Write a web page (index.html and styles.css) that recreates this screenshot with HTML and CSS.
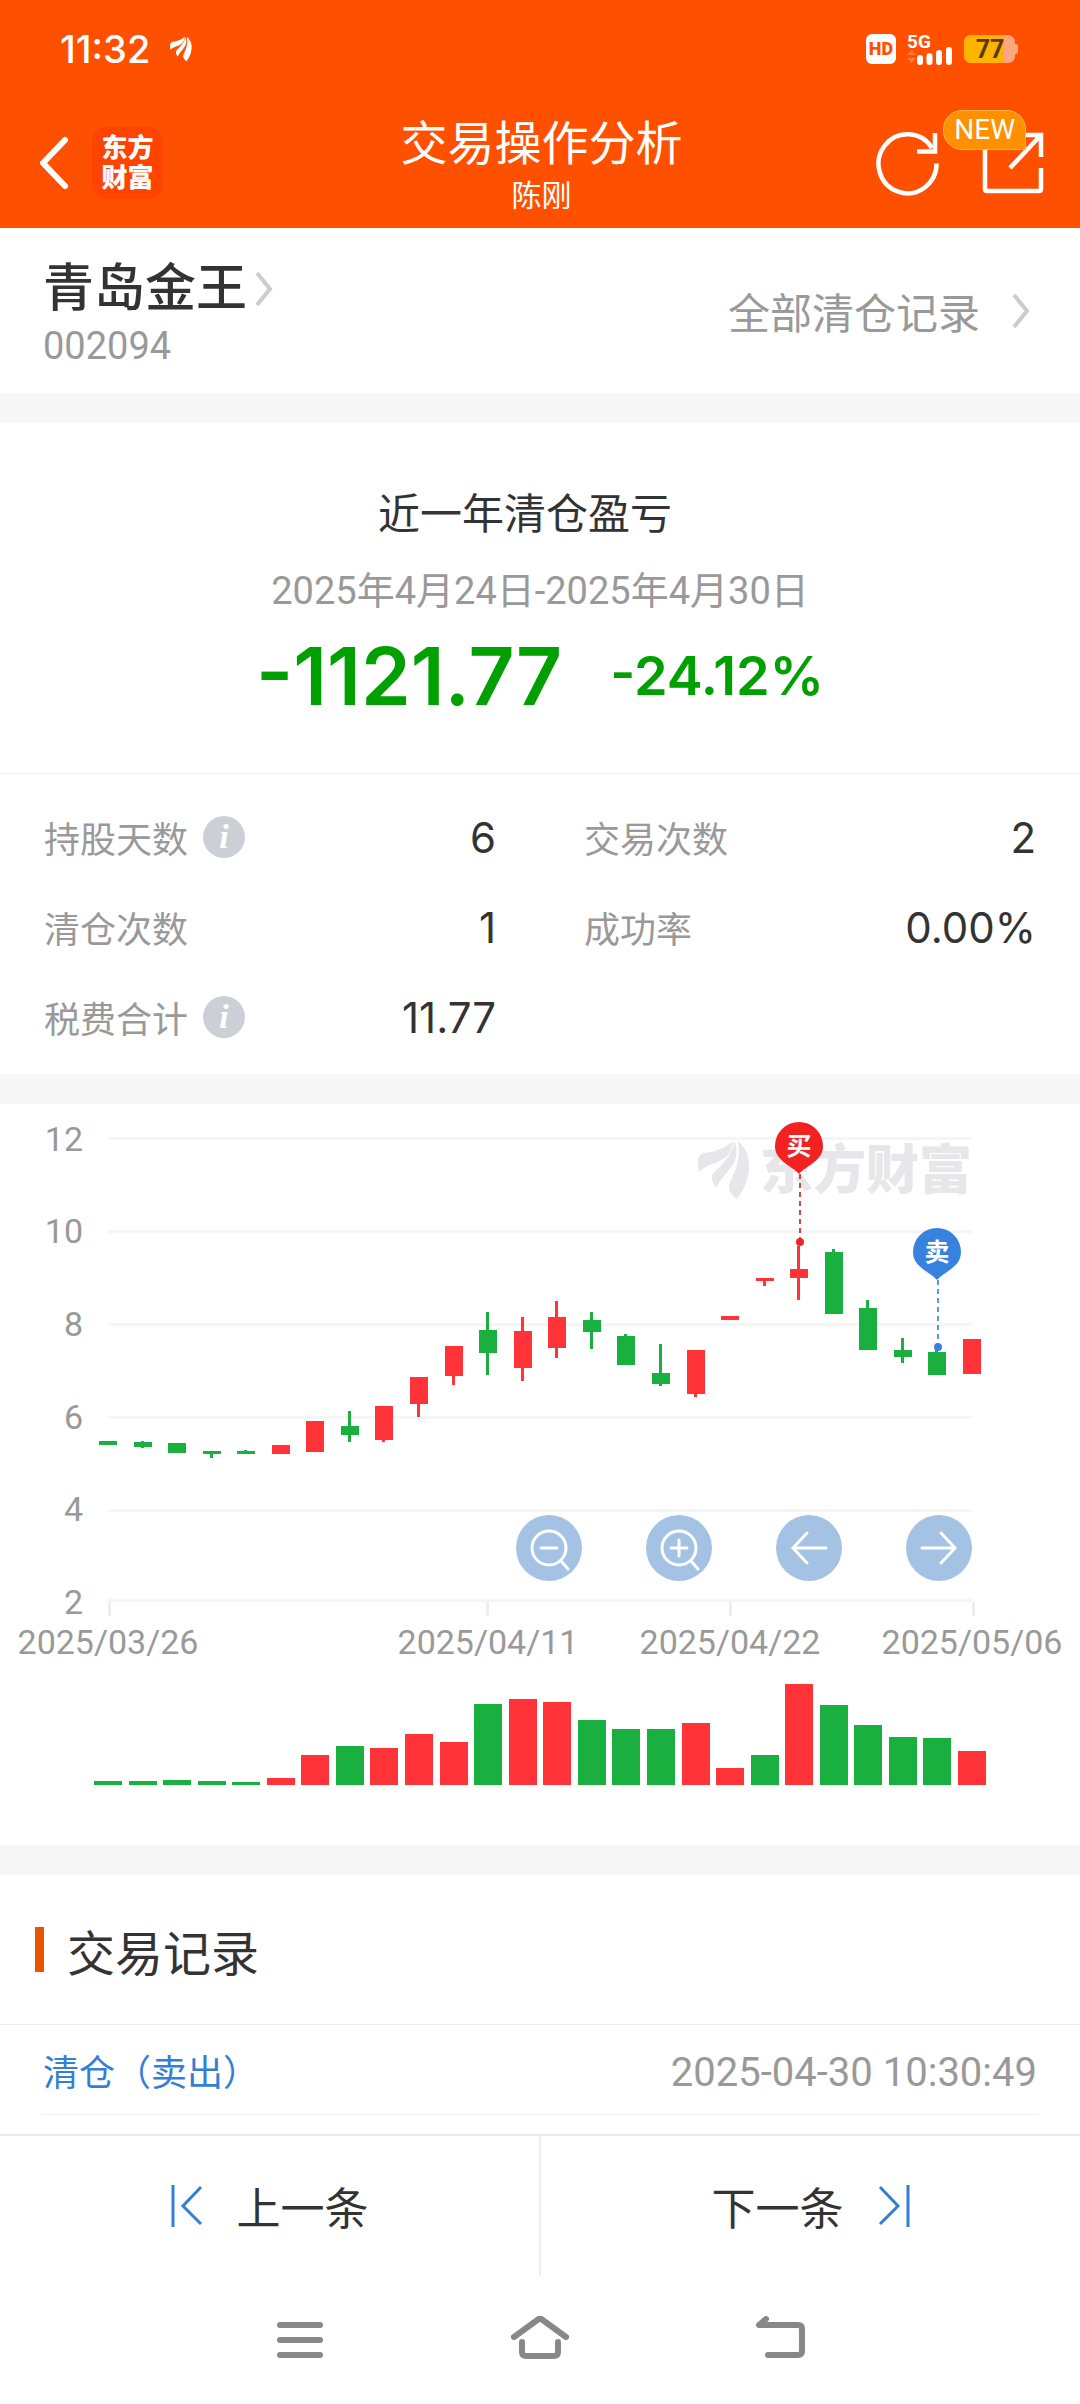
FILE: index.html
```html
<!DOCTYPE html>
<html lang="zh-CN">
<head>
  <meta charset="UTF-8">
  <meta name="viewport" content="width=device-width, initial-scale=1.0">
  <title>交易操作分析</title>
  <link rel="stylesheet" href="styles.css">
</head>
<body>
  <!-- 顶部 -->
  <header class="top">
    <div class="status">
      <span class="time">11:32</span>
      <svg class="status-leaf" width="22" height="26" viewBox="0 0 52 58">
        <use href="#leaf" fill="#fff"/>
      </svg>
      <div class="status-right">
        <span class="hd">HD</span>
        <svg width="46" height="44" viewBox="0 -6 46 44">
          <text class="net" x="0" y="15">5G</text>
          <path d="M0 22l4.500-5 4.500 5zM0 25h9l-4.500 5z" fill="#ff7a40"/>
          <path d="M13 25v4M22.500 23v6M32 20v9M42 17v12" stroke="#fff" stroke-width="6" stroke-linecap="round"/>
        </svg>
        <svg width="54" height="28" viewBox="0 0 54 28">
          <rect width="51" height="28" rx="7" fill="#ffa680"/>
          <rect x="49" y="9" width="5" height="10" rx="2" fill="#ffa680"/>
          <path d="M7 0h33v28H7a7 7 0 0 1-7-7V7a7 7 0 0 1 7-7z" fill="#ffb400"/>
          <text class="battery" x="26" y="23" text-anchor="middle">77</text>
        </svg>
      </div>
    </div>
    <div class="titlebar">
      <div class="left">
        <button class="icon-btn" aria-label="返回">
          <svg width="30" height="54" viewBox="0 0 30 54" fill="none" stroke="#fff" stroke-width="6" stroke-linecap="round" stroke-linejoin="round"><path d="M26 4L4 27l22 23"/></svg>
        </button>
        <div class="brand">东方<br>财富</div>
      </div>
      <div class="title">
        <h1>交易操作分析</h1>
        <p>陈刚</p>
      </div>
      <div class="right">
        <button class="icon-btn" aria-label="刷新">
          <svg width="64" height="66" viewBox="0 0 64 66" fill="none" stroke="#fff" stroke-width="4.500">
            <path d="M60.500 33.500A29 29.500 0 1 1 56 18"/><path d="M59 3v18.500H41"/>
          </svg>
        </button>
        <button class="icon-btn share" aria-label="分享">
          <svg width="62" height="62" viewBox="0 0 62 62" fill="none" stroke="#fff" stroke-width="4.500">
            <path d="M22 3H5q-2 0-2 2v52q0 2 2 2h52q2 0 2-2V36M40 3h19v22M58 4L28 36"/>
          </svg>
          <span class="new">NEW</span>
        </button>
      </div>
    </div>
  </header>

  <!-- 股票 -->
  <section class="stock">
    <a href="#" class="stock-name">
      <h2>青岛金王 <svg class="chev" width="18" height="36" viewBox="0 0 18 36"><path d="M2 2l13 16L2 34"/></svg></h2>
      <span class="code">002094</span>
    </a>
    <a href="#" class="all">全部清仓记录 <svg class="chev" width="18" height="36" viewBox="0 0 18 36"><path d="M2 2l13 16L2 34"/></svg></a>
  </section>

  <!-- 清仓盈亏 -->
  <section class="profit">
    <h3>近一年清仓盈亏</h3>
    <p class="period">2025年4月24日-2025年4月30日</p>
    <p class="result"><span class="amount">-1121.77</span><span class="rate">-24.12%</span></p>
  </section>
  <dl class="stats">
    <div><dt>持股天数 <i class="info">i</i></dt><dd>6</dd></div>
    <div><dt>交易次数</dt><dd>2</dd></div>
    <div><dt>清仓次数</dt><dd>1</dd></div>
    <div><dt>成功率</dt><dd>0.00%</dd></div>
    <div><dt>税费合计 <i class="info">i</i></dt><dd>11.77</dd></div>
  </dl>

  <!-- K线图 -->
  <section class="chart">
    <svg viewBox="0 0 1080 741">
      <defs>
        <g id="leaf">
          <path d="M0 18C1 13 5 12 12 11C22 9 30 5 35 0C34 14 25 20 14 23C8 25 4 28 1 31Q0 24 0 18z"/>
          <path d="M37 0C41 14 37 22 30 30C25 36 21 41 18 47Q13 39 14 35C16 28 30 24 37 0z"/>
          <path d="M40 0C49 8 52 18 51 28C50 41 45 50 39 58Q32 53 31 47C31 38 44 27 40 0z"/>
        </g>
      </defs>
      <g class="grid">
        <path d="M108 34.500H972M108 127.500H972M108 220.500H972M108 313.500H972M108 406.500H972M108 496.500H972"/>
        <path class="ticks" d="M109.500 498v14M487.500 498v14M730.500 498v14M973.500 498v14"/>
      </g>
      <g class="axis" text-anchor="end">
        <text x="83" y="47">12</text>
        <text x="83" y="139">10</text>
        <text x="83" y="232">8</text>
        <text x="83" y="325">6</text>
        <text x="83" y="417">4</text>
        <text x="83" y="510">2</text>
      </g>
      <g class="axis" text-anchor="middle">
        <text x="108" y="550">2025/03/26</text>
        <text x="488" y="550">2025/04/11</text>
        <text x="730" y="550">2025/04/22</text>
        <text x="972" y="550">2025/05/06</text>
      </g>
      <g class="watermark">
        <use href="#leaf" x="698" y="37"/>
        <text x="760" y="85">东方财富</text>
      </g>
      <g id="candles"></g>
      <g id="volumes"></g>
      <g class="mark buy">
        <path d="M800 70v64" class="dash"/>
        <circle cx="800" cy="138" r="4"/>
        <path d="M799 18a24 24 0 0 1 24 24c0 15-16 19-24 28c-8-9-24-13-24-28a24 24 0 0 1 24-24z"/>
        <text x="799" y="51">买</text>
      </g>
      <g class="mark sell">
        <path d="M938 176v64" class="dash"/>
        <circle cx="938" cy="243" r="4"/>
        <path d="M937 124a24 24 0 0 1 24 24c0 15-16 19-24 28c-8-9-24-13-24-28a24 24 0 0 1 24-24z"/>
        <text x="937" y="157">卖</text>
      </g>
    </svg>
    <div class="tools">
      <button aria-label="缩小"><svg viewBox="0 0 66 66"><circle cx="33" cy="33" r="17"/><path d="M25 33h16M45 46l7 8"/></svg></button>
      <button aria-label="放大"><svg viewBox="0 0 66 66"><circle cx="33" cy="33" r="17"/><path d="M25 33h16M33 25v16M45 46l7 8"/></svg></button>
      <button aria-label="左移"><svg viewBox="0 0 66 66"><path d="M50 33H17M31 18L17 33l14 15"/></svg></button>
      <button aria-label="右移"><svg viewBox="0 0 66 66"><path d="M16 33h33M35 18l14 15-14 15"/></svg></button>
    </div>
  </section>

  <!-- 交易记录 -->
  <section class="records">
    <h3>交易记录</h3>
    <ul>
      <li><a href="#">清仓（卖出）</a><time>2025-04-30 10:30:49</time></li>
    </ul>
  </section>

  <nav class="pager">
    <button><svg width="32" height="42" viewBox="0 0 32 42"><path d="M2 0v42M30 2L12 21l18 18"/></svg>上一条</button>
    <button>下一条<svg width="32" height="42" viewBox="0 0 32 42"><path d="M30 0v42M2 2l18 19L2 39"/></svg></button>
  </nav>

  <!-- 系统导航键 -->
  <nav class="system">
    <button aria-label="菜单"><svg width="60" height="48" viewBox="0 0 60 48"><path d="M10 9h40M10 24h40M10 39h40"/></svg></button>
    <button aria-label="主页"><svg width="60" height="48" viewBox="0 0 60 48"><path d="M4 21L30 2l26 19M12 26v10q0 4 4 4h28q4 0 4-4V26"/></svg></button>
    <button aria-label="后退"><svg width="60" height="48" viewBox="0 0 60 48"><path d="M16 3L9 9h39q4 0 4 4v22q0 4-4 4H18"/></svg></button>
  </nav>

  <script src="chart.js"></script>
</body>
</html>
```
FILE: styles.css
```css
/* 全局 */
* {
  box-sizing: border-box;
  margin: 0;
  padding: 0;
}

body {
  font-family: Roboto, "Noto Sans CJK SC", sans-serif;
  background: #fff;
  color: #333;
}

h1, h2, h3 {
  font-weight: 400;
}

a {
  color: inherit;
  text-decoration: none;
}

ul {
  list-style: none;
}

svg {
  display: block;
}

button {
  font: inherit;
  color: inherit;
  background: none;
  border: none;
  cursor: pointer;
}

/* 顶部 */
.top {
  background: #ff5000;
  color: #fff;
}

.status {
  display: flex;
  align-items: center;
  height: 98px;
  padding: 0 62px 0 60px;
}

.time {
  font: 500 38px Inter, sans-serif;
}

.status-leaf {
  margin-left: 20px;
}

.status-right {
  display: flex;
  align-items: center;
  gap: 11px;
  margin-left: auto;
}

.hd {
  width: 30px;
  border-radius: 6px;
  background: #fff;
  color: #ff5000;
  font-size: 18px;
  font-weight: 900;
  line-height: 30px;
  text-align: center;
}

.net {
  font-size: 19px;
  font-weight: 700;
  fill: #fff;
}

.battery {
  font-size: 25px;
  font-weight: 700;
  fill: #5a3a00;
}

.titlebar {
  display: grid;
  grid-template-columns: 1fr auto 1fr;
  align-items: center;
  height: 130px;
  padding: 0 36px 0 39px;
}

.left, .right {
  display: flex;
  align-items: center;
}

.left {
  gap: 23px;
}

.right {
  justify-content: flex-end;
  gap: 42px;
}

.brand {
  width: 71px;
  height: 72px;
  padding-top: 6px;
  border-radius: 14px;
  background: #ff4400;
  font-size: 26px;
  font-weight: 900;
  line-height: 30px;
  text-align: center;
}

.title {
  padding-top: 8px;
  text-align: center;
}

.title h1 {
  font-size: 47px;
  line-height: 58px;
}

.title p {
  font-size: 30px;
  line-height: 46px;
}

.share {
  position: relative;
}

.new {
  position: absolute;
  right: 18px;
  bottom: 44px;
  padding: 0 10px;
  border: 1px solid #ffb352;
  border-radius: 19px 19px 0 19px;
  background: #ff9000;
  font-size: 28px;
  line-height: 38px;
}

/* 股票 */
.stock {
  display: flex;
  justify-content: space-between;
  align-items: center;
  height: 165px;
  padding: 0 50px 0 43px;
}

.stock-name {
  padding-top: 10px;
}

.stock h2 {
  display: flex;
  align-items: center;
  gap: 8px;
  font-size: 51px;
  font-weight: 500;
  line-height: 60px;
}

.code {
  color: #999;
  font-size: 38px;
  line-height: 54px;
}

.all {
  display: flex;
  align-items: center;
  gap: 32px;
  color: #999;
  font-size: 42px;
}

.chev {
  fill: none;
  stroke: #ccc;
  stroke-width: 4;
}

/* 清仓盈亏 */
.profit {
  padding: 62px 0 42px;
  border-top: 30px solid #f7f7f7;
  border-bottom: 1px solid #eee;
  text-align: center;
}

.profit h3 {
  padding-right: 30px;
  font-size: 42px;
  line-height: 60px;
}

.period {
  margin-top: 16px;
  color: #999;
  font-size: 38px;
  line-height: 60px;
}

.result {
  display: flex;
  justify-content: center;
  align-items: center;
  gap: 48px;
  color: #00a000;
  font-family: Inter, sans-serif;
  font-weight: 600;
  line-height: 110px;
}

.amount {
  font-size: 80px;
}

.rate {
  font-size: 54px;
}

.stats {
  display: grid;
  grid-template-columns: 1fr 1fr;
  column-gap: 88px;
  padding: 18px 44px 12px;
}

.stats div {
  display: flex;
  justify-content: space-between;
  align-items: center;
  height: 90px;
}

.stats dt {
  display: flex;
  align-items: center;
  gap: 15px;
  color: #999;
  font-size: 36px;
}

.stats dd {
  font-family: Inter, sans-serif;
  font-size: 42px;
}

.info {
  width: 42px;
  border-radius: 50%;
  background: #ccd0d6;
  color: #fff;
  font: italic 700 34px "Liberation Serif", serif;
  line-height: 42px;
  text-align: center;
}

/* K线图 */
.chart {
  position: relative;
  border-top: 30px solid #f7f7f7;
}

.grid {
  stroke: #f5f5f5;
  stroke-width: 3;
}

.ticks {
  stroke: #eee;
}

.axis {
  font-size: 34px;
  fill: #999;
}

.watermark {
  fill: #e6e6eb;
}

.watermark text {
  font-size: 53px;
  font-weight: 900;
}

.up {
  fill: #ff3338;
}

.down {
  fill: #1ab040;
}

.mark text {
  font-size: 25px;
  font-weight: 700;
  fill: #fff;
  text-anchor: middle;
}

.buy {
  fill: #f22222;
}

.sell {
  fill: #3782df;
}

.dash {
  stroke-width: 2;
  stroke-dasharray: 5 4;
}

.buy .dash {
  stroke: #d04545;
}

.sell .dash {
  stroke: #5b9bd0;
}

.tools {
  position: absolute;
  right: 108px;
  bottom: 264px;
  display: flex;
  gap: 64px;
}

.tools button {
  width: 66px;
  height: 66px;
  border-radius: 50%;
  background: #a4c2e4;
}

.tools svg {
  fill: none;
  stroke: #fff;
  stroke-width: 3;
  stroke-linecap: round;
}

/* 交易记录 */
.records {
  padding-bottom: 19px;
  border-top: 30px solid #f7f7f7;
}

.records h3 {
  display: flex;
  align-items: center;
  gap: 23px;
  height: 149px;
  padding-left: 35px;
  font-size: 48px;
}

.records h3::before {
  content: "";
  width: 9px;
  height: 45px;
  background: #e85500;
}

.records ul {
  padding: 0 43px;
  border-top: 1px solid #eee;
}

.records li {
  display: flex;
  justify-content: space-between;
  align-items: center;
  height: 90px;
  border-bottom: 1px solid #eee;
}

.records a {
  color: #337fd3;
  font-size: 36px;
}

.records time {
  padding-top: 6px;
  color: #999;
  font-size: 40px;
}

/* 底部 */
.pager {
  display: flex;
  border-top: 2px solid #ebebeb;
}

.pager button {
  flex: 1;
  display: flex;
  justify-content: center;
  align-items: center;
  gap: 34px;
  height: 140px;
  font-size: 44px;
}

.pager button + button {
  border-left: 2px solid #eee;
}

.pager svg {
  fill: none;
  stroke: #337fd3;
  stroke-width: 3;
}

.system {
  display: flex;
  justify-content: center;
  align-items: center;
  gap: 180px;
  height: 128px;
}

.system svg {
  fill: none;
  stroke: #888;
  stroke-width: 6;
  stroke-linecap: round;
  stroke-linejoin: round;
}
```
FILE: chart.js
```javascript
// [涨跌, 上影线, 实体上沿, 实体下沿, 下影线, 成交量]
const data = [
  ["down", 337, 337, 341, 341, 4],
  ["down", 337, 338, 343, 344, 4],
  ["down", 339, 339, 349, 349, 5],
  ["down", 347, 347, 350, 354, 4],
  ["down", 346, 347, 350, 350, 3],
  ["up", 341, 341, 350, 350, 7],
  ["up", 317, 317, 348, 348, 30],
  ["down", 307, 322, 331, 338, 39],
  ["up", 302, 302, 336, 338, 37],
  ["up", 273, 273, 300, 313, 51],
  ["up", 242, 242, 272, 281, 43],
  ["down", 208, 226, 249, 271, 81],
  ["up", 213, 227, 264, 277, 86],
  ["up", 197, 213, 244, 254, 83],
  ["down", 208, 216, 228, 245, 65],
  ["down", 230, 232, 261, 261, 56],
  ["down", 240, 269, 280, 282, 56],
  ["up", 246, 246, 290, 293, 62],
  ["up", 212, 212, 216, 216, 17],
  ["up", 174, 174, 177, 182, 30],
  ["up", 142, 165, 174, 196, 101],
  ["down", 145, 148, 210, 210, 80],
  ["down", 196, 204, 246, 246, 60],
  ["down", 234, 246, 253, 259, 48],
  ["down", 246, 248, 271, 271, 47],
  ["up", 235, 235, 270, 270, 34]
];
// 第20根价格上涨但量柱为绿色
const volumeColor = { 19: "down" };

const candles = document.getElementById("candles");
const volumes = document.getElementById("volumes");

function addRect(parent, cls, x, y, w, h) {
  const rect = document.createElementNS("http://www.w3.org/2000/svg", "rect");
  rect.setAttribute("class", cls);
  rect.setAttribute("x", x);
  rect.setAttribute("y", y);
  rect.setAttribute("width", w);
  rect.setAttribute("height", h);
  parent.appendChild(rect);
}

data.forEach(([dir, high, top, bottom, low, vol], i) => {
  const x = Math.round(108 + i * 864 / 25);
  addRect(candles, dir, x - 2, high, 3, low - high);
  addRect(candles, dir, x - 9, top, 18, bottom - top);
  addRect(volumes, volumeColor[i] || dir, x - 14, 681 - vol, 28, vol);
});
```
